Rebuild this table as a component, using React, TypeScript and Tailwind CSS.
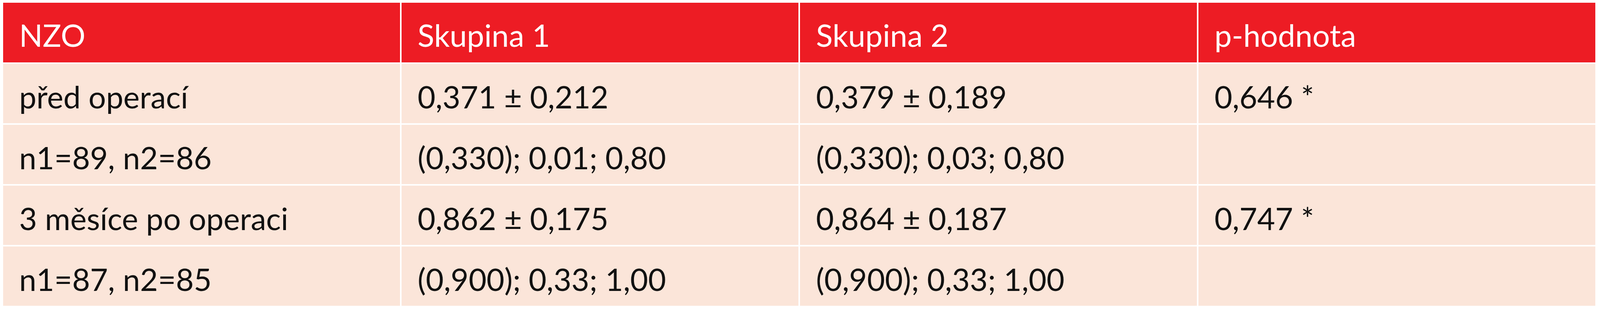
import React from "react";

const header = ["NZO", "Skupina 1", "Skupina 2", "p-hodnota"];
const rows = [
  ["před operací", "0,371 ± 0,212", "0,379 ± 0,189", "0,646 *"],
  ["n1=89, n2=86", "(0,330); 0,01; 0,80", "(0,330); 0,03; 0,80", ""],
  ["3 měsíce po operaci", "0,862 ± 0,175", "0,864 ± 0,187", "0,747 *"],
  ["n1=87, n2=85", "(0,900); 0,33; 1,00", "(0,900); 0,33; 1,00", ""],
];

export default function App() {
  return (
    <div
      className="w-full h-[800px] bg-white pl-[8px] pr-[12px] pt-[7px] pb-[16px]"
      style={{ fontFamily: "Lato, 'Open Sans', sans-serif" }}
    >
      <div className="grid grid-cols-4 gap-[4px] text-[79px] leading-none">
        {header.map((h) => (
          <div
            key={h}
            className="h-[153px] bg-[#ED1C24] text-white flex items-center pl-[41px] pt-[12px] whitespace-nowrap"
          >
            {h}
          </div>
        ))}
        {rows.map((r, i) =>
          r.map((c, j) => (
            <div
              key={`${i}-${j}`}
              className="h-[152px] bg-[#FBE5D9] text-[#111111] flex items-center pl-[41px] pt-[14px] whitespace-nowrap"
            >
              {c}
            </div>
          ))
        )}
      </div>
    </div>
  );
}
